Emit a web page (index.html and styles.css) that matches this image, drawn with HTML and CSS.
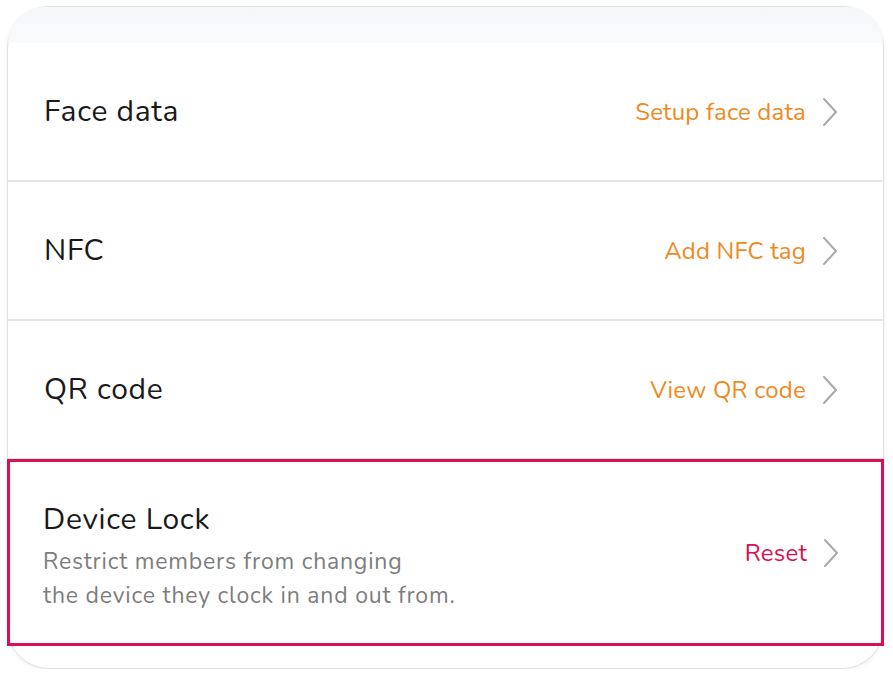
FILE: index.html
```html
<!DOCTYPE html>
<html lang="en">
<head>
<meta charset="utf-8">
<title>Settings</title>
<link rel="stylesheet" href="styles.css">
</head>
<body>
<div class="device">
  <div class="topbar"></div>
  <div class="row">
    <div class="label">Face data</div>
    <div class="action"><span class="action-text orange">Setup face data</span><svg class="chev" viewBox="0 0 16 30" width="16" height="30"><path d="M2 2 L14 15 L2 28" fill="none" stroke="#a9a9a9" stroke-width="2" stroke-linecap="round" stroke-linejoin="round"/></svg></div>
  </div>
  <div class="row">
    <div class="label">NFC</div>
    <div class="action"><span class="action-text orange">Add NFC tag</span><svg class="chev" viewBox="0 0 16 30" width="16" height="30"><path d="M2 2 L14 15 L2 28" fill="none" stroke="#a9a9a9" stroke-width="2" stroke-linecap="round" stroke-linejoin="round"/></svg></div>
  </div>
  <div class="row">
    <div class="label">QR code</div>
    <div class="action"><span class="action-text orange">View QR code</span><svg class="chev" viewBox="0 0 16 30" width="16" height="30"><path d="M2 2 L14 15 L2 28" fill="none" stroke="#a9a9a9" stroke-width="2" stroke-linecap="round" stroke-linejoin="round"/></svg></div>
  </div>
  <div class="row row-lock">
    <div class="lock-info">
      <div class="label">Device Lock</div>
      <div class="desc">Restrict members from changing<br>the device they clock in and out from.</div>
    </div>
    <div class="action"><span class="action-text pink">Reset</span><svg class="chev" viewBox="0 0 16 30" width="16" height="30"><path d="M2 2 L14 15 L2 28" fill="none" stroke="#a9a9a9" stroke-width="2" stroke-linecap="round" stroke-linejoin="round"/></svg></div>
  </div>
  <div class="bottom"></div>
</div>
</body>
</html>
```
FILE: styles.css
```css
html, body {
  margin: 0;
  padding: 0;
  background: #ffffff;
}
body {
  padding: 6px 8px 0 7px;
  font-family: "Nunito", "Lato", "Noto Sans", sans-serif;
}
.device {
  width: 877px;
  height: 663px;
  box-sizing: border-box;
  border: 1px solid #e2e2e4;
  border-radius: 42px;
  background: #ffffff;
  box-shadow: 0 1px 4px rgba(0,0,0,0.07);
  display: flex;
  flex-direction: column;
}
.topbar {
  height: 36px;
  background: linear-gradient(#f6f7fa, #f9fafc);
  border-radius: 41px 41px 0 0;
  flex: none;
}
.row {
  flex: none;
  height: 137px;
  border-bottom: 2px solid #e6e6e6;
  display: flex;
  align-items: center;
  justify-content: space-between;
  padding: 0 45px 0 36px;
  box-sizing: content-box;
}
.row-lock {
  height: 181px;
  border: 3px solid #dc0f50;
  padding: 0 42px 0 33px;
  margin: -1px -1px 0 -1px;
}
.label {
  font-size: 30px;
  color: #1a1a1a;
  letter-spacing: 0.7px;
}
.desc {
  font-size: 23px;
  color: #7d7d7d;
  line-height: 34px;
  margin-top: 5px;
  letter-spacing: 0.8px;
}
.lock-info {
  padding-top: 6px;
}
.action {
  display: flex;
  align-items: center;
  gap: 16px;
}
.action-text {
  font-size: 24px;
  letter-spacing: 0.2px;
}
.orange { color: #f0891c; }
.pink { color: #dc0f50; }
.chev {
  display: block;
}
.bottom {
  flex: 1;
}
```
